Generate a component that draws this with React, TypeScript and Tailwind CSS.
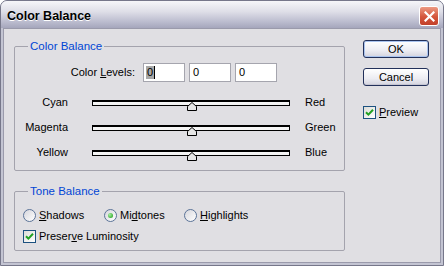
import type { ReactNode } from 'react';

const FONT = "font-['Liberation_Sans',Arial,sans-serif]";

/** XP style check box, always ticked in this dialog. */
function CheckBox() {
  return (
    <span className="flex h-[13px] w-[13px] shrink-0 items-center justify-center border border-[#1c5180] bg-[linear-gradient(135deg,#dcdcd7,#ffffff)]">
      <svg width="9" height="9" viewBox="0 0 9 9">
        <path d="M1 4.2 L3.4 6.6 L8 1.8" fill="none" stroke="#21a121" strokeWidth="2" />
      </svg>
    </span>
  );
}

/** XP style radio button with the green dot when selected. */
function Radio({ checked = false }: { checked?: boolean }) {
  return (
    <span className="flex h-[13px] w-[13px] shrink-0 items-center justify-center rounded-full border border-[#5b7398] bg-[linear-gradient(135deg,#d6d6dc,#ffffff)]">
      {checked && <span className="h-[5px] w-[5px] rounded-full bg-[radial-gradient(circle_at_35%_35%,#a6f0a2,#16970f)]" />}
    </span>
  );
}

/** Sunken track with the pentagon thumb at the midpoint. */
function Slider() {
  return (
    <div className="relative h-[6px] w-[198px] border border-t-2 border-black bg-[#f4f4f4]">
      <svg className="absolute left-[94px] top-0" width="10" height="9" viewBox="0 0 10 9">
        <path d="M0.5 8.5 V4.5 L5 0.5 L9.5 4.5 V8.5 Z" fill="#e6e6e6" stroke="#000" />
      </svg>
    </div>
  );
}

function SliderRow({ left, right }: { left: string; right: string }) {
  return (
    <div className="flex h-[25px] items-center">
      <span className="w-[53px] text-right">{left}</span>
      <div className="ml-[24px]">
        <Slider />
      </div>
      <span className="ml-[15px]">{right}</span>
    </div>
  );
}

function Group({ title, className, children }: { title: string; className?: string; children: ReactNode }) {
  return (
    <fieldset className={`w-[331px] rounded-[2px] border border-[#a4a3ad] ${className ?? ''}`}>
      <legend className="ml-[13px] px-[2px] text-[11.5px] leading-[13px] text-[#0046d5]">{title}</legend>
      {children}
    </fieldset>
  );
}

function XpButton({ label, isDefault = false }: { label: string; isDefault?: boolean }) {
  return (
    <button
      type="button"
      className={`flex h-[18px] w-[66px] items-center justify-center rounded-[3px] border border-[#22305a] bg-[linear-gradient(#ffffff,#ececf2_60%,#d3d3de)] text-[11px] leading-none text-black ${
        isDefault ? 'shadow-[inset_0_0_0_1px_#a9c3ee]' : 'shadow-[inset_0_-1px_0_#c5c5d2]'
      }`}
    >
      {label}
    </button>
  );
}

function LevelInput({ selected = false }: { selected?: boolean }) {
  return (
    <div className="flex h-[19px] w-[42px] items-center border border-[#a5a5ae] bg-white pl-[2px]">
      {selected ? (
        <>
          <span className="bg-[#a8a8a8] px-[1px] leading-[13px]">0</span>
          <span className="h-[13px] w-px bg-black" />
        </>
      ) : (
        <span className="pl-[1px]">0</span>
      )}
    </div>
  );
}

export default function App() {
  return (
    <div className={`h-[266px] w-[444px] bg-white text-[11px] text-black ${FONT}`}>
      <div className="flex h-full flex-col rounded-t-[7px] border border-[#76778a] bg-[#c3c4d2]">
        {/* title bar */}
        <div className="flex h-[27px] items-center justify-between rounded-t-[6px] bg-[linear-gradient(#f6f6f9,#dedee7_40%,#b8b9cc_80%,#a5a6bc)] pl-[6px] pr-[4px]">
          <span className="mt-[4px] text-[12.5px] font-bold [text-shadow:0_1px_0_#ffffff]">Color Balance</span>
          <span className="mt-[3px] flex h-[20px] w-[20px] items-center justify-center rounded-[3px] border border-white bg-[linear-gradient(#ec9a83,#d4553b_55%,#c2402a)]">
            <svg width="11" height="11" viewBox="0 0 11 11">
              <path d="M1.5 1.5 L9.5 9.5 M9.5 1.5 L1.5 9.5" stroke="#fff" strokeWidth="2.2" strokeLinecap="square" />
            </svg>
          </span>
        </div>

        {/* client area */}
        <div className="mx-[2px] mb-[2px] flex flex-1 border border-[#9a9aab] bg-[#e0dfe3] pt-[11px]">
          <div className="ml-[10px] flex flex-col">
            <Group title="Color Balance">
              <div className="mt-[10px] flex items-center">
                <span className="w-[120px] text-right">
                  Color <u>L</u>evels:
                </span>
                <div className="ml-[8px] flex gap-[4px]">
                  <LevelInput selected />
                  <LevelInput />
                  <LevelInput />
                </div>
              </div>
              <div className="mt-[8px] pb-[5px]">
                <SliderRow left="Cyan" right="Red" />
                <SliderRow left="Magenta" right="Green" />
                <SliderRow left="Yellow" right="Blue" />
              </div>
            </Group>

            <Group title="Tone Balance" className="mt-[14px]">
              <div className="ml-[8px] mt-[10px] flex h-[14px] items-center">
                <label className="flex w-[81px] items-center gap-[3px]">
                  <Radio />
                  <span>
                    <u>S</u>hadows
                  </span>
                </label>
                <label className="flex w-[80px] items-center gap-[3px]">
                  <Radio checked />
                  <span>
                    Mi<u>d</u>tones
                  </span>
                </label>
                <label className="flex items-center gap-[3px]">
                  <Radio />
                  <span>
                    <u>H</u>ighlights
                  </span>
                </label>
              </div>
              <label className="ml-[8px] mt-[7px] flex h-[14px] items-center gap-[3px]">
                <CheckBox />
                <span>
                  Preser<u>v</u>e Luminosity
                </span>
              </label>
              <div className="h-[7px]" />
            </Group>
          </div>

          <div className="ml-[18px] flex flex-col">
            <XpButton label="OK" isDefault />
            <div className="mt-[10px]">
              <XpButton label="Cancel" />
            </div>
            <label className="mt-[18px] flex items-center gap-[3px]">
              <CheckBox />
              <span>
                <u>P</u>review
              </span>
            </label>
          </div>
        </div>
      </div>
    </div>
  );
}
